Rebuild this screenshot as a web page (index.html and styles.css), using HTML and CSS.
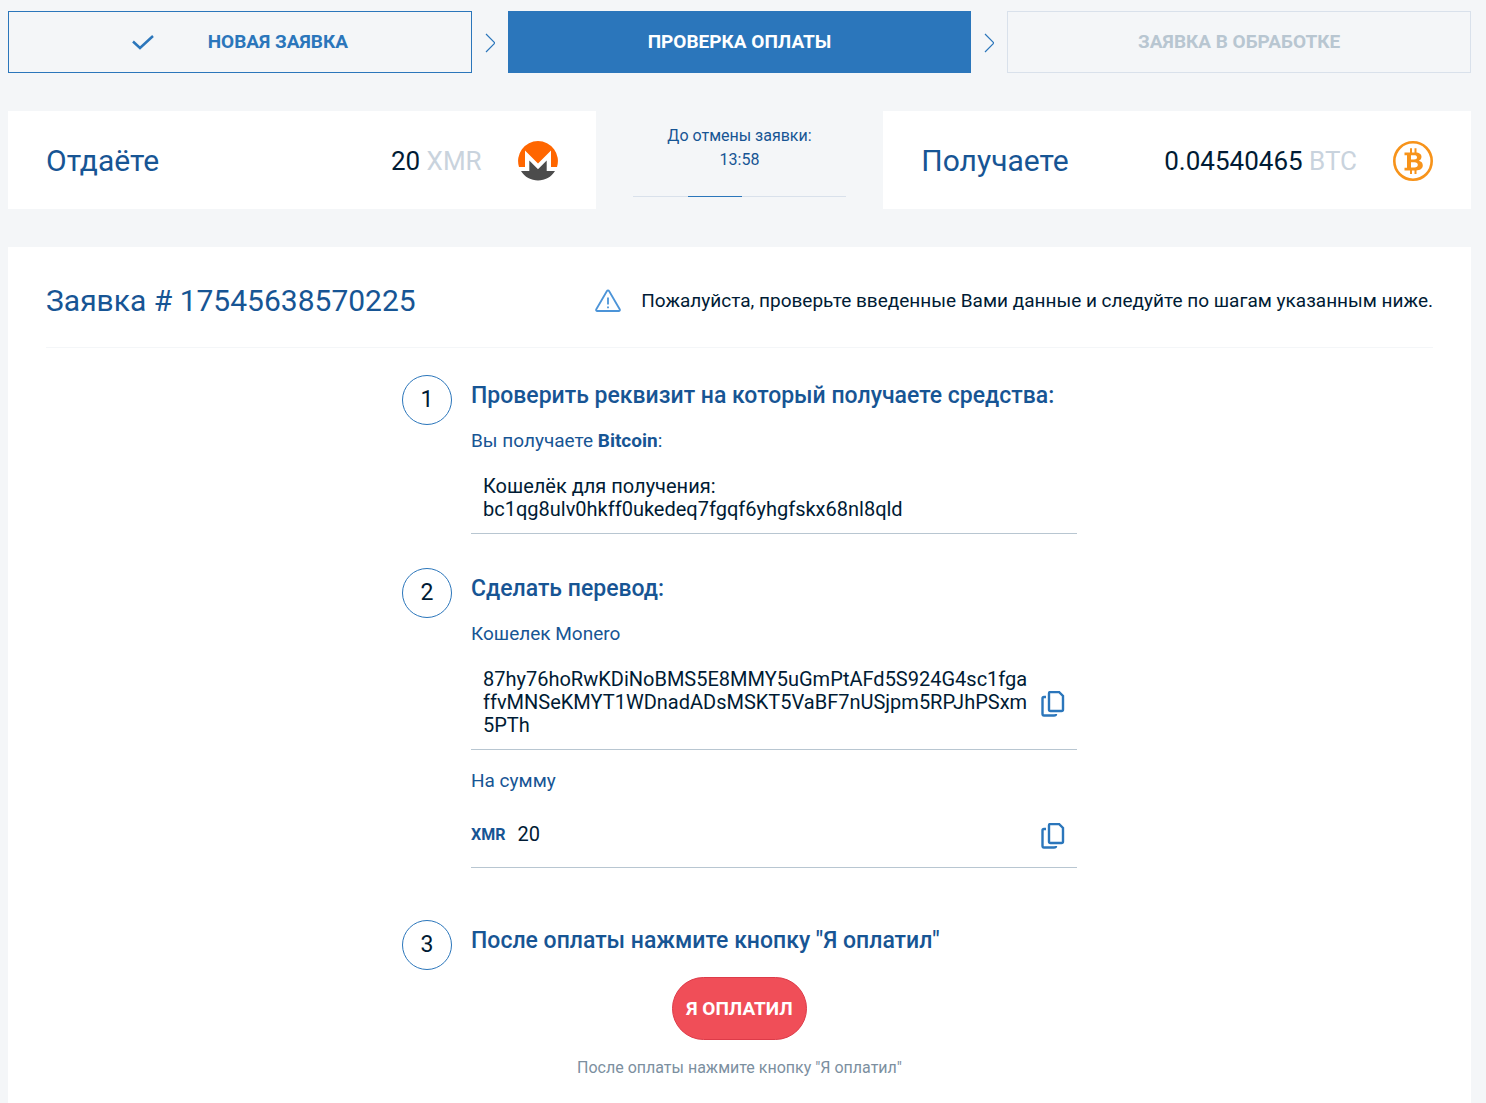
FILE: index.html
```html
<!DOCTYPE html>
<html lang="ru">
<head>
    <meta charset="UTF-8">
    <meta name="viewport" content="width=device-width, initial-scale=1.0">
    <title>Проверка оплаты</title>
    <link rel="stylesheet" href="styles.css">
</head>
<body>
    <ol class="progress">
        <li class="progress-step done">
            <svg class="check" viewBox="0 0 22 16" aria-hidden="true"><path d="M1 7.5l7 6.5L21 2"/></svg>
            <span>Новая заявка</span>
        </li>
        <li class="progress-arrow" aria-hidden="true">
            <svg viewBox="0 0 10 20"><path d="M1 1l9 9-9 9"/></svg>
        </li>
        <li class="progress-step active" aria-current="step">Проверка оплаты</li>
        <li class="progress-arrow" aria-hidden="true">
            <svg viewBox="0 0 10 20"><path d="M1 1l9 9-9 9"/></svg>
        </li>
        <li class="progress-step">Заявка в обработке</li>
    </ol>

    <section class="exchange">
        <div class="exchange-card">
            <h2 class="title">Отдаёте</h2>
            <p class="amount">20 <span>XMR</span></p>
            <svg class="coin" viewBox="0 0 40 40" aria-hidden="true">
                <path fill="#ff6600" d="M20 0a20 20 0 0 1 19 26h-6V9.500L20 22.500 7 9.500V26H1A20 20 0 0 1 20 0z"/>
                <path fill="#4c4c4c" d="M11.300 19.500l8.700 8.700 8.700-8.700V30H37a20 20 0 0 1-34 0h8.300z"/>
            </svg>
        </div>
        <div class="timer">
            <p>До отмены заявки:</p>
            <p>13:58</p>
            <div class="timer-line"><div class="timer-mark"></div></div>
        </div>
        <div class="exchange-card">
            <h2 class="title">Получаете</h2>
            <p class="amount">0.04540465 <span>BTC</span></p>
            <svg class="coin" viewBox="0 0 40 40" aria-hidden="true">
                <circle cx="20" cy="20" r="18.700" fill="none" stroke="#f7931a" stroke-width="2.600"/>
                <path fill="none" stroke="#f7931a" stroke-width="2" d="M18 7.300v5M22.500 7.300v5M18 28v5M22.500 28v5"/>
                <path fill="#f7931a" fill-rule="evenodd" d="M11.500 11.500h11c3.800 0 6 1.600 6 4.300 0 1.900-1 3.200-2.600 3.900 2.400.600 3.900 2.200 3.900 4.600 0 3.200-2.500 5.200-6.800 5.200h-11.500v-2.700h2.500V14.200h-2.500zM18 14.200v4.300h3c2 0 3-.700 3-2.200s-1-2.100-3-2.100zM18 21.200v5.300h3.500c2.100 0 3.300-.900 3.300-2.700s-1.200-2.600-3.300-2.600z"/>
            </svg>
        </div>
    </section>

    <main class="order">
        <header class="order-head">
            <h1 class="title">Заявка # 17545638570225</h1>
            <p class="notice">
                <svg viewBox="0 0 26 24" aria-hidden="true"><path d="M11.800 2.200L1.300 20.300c-.500.900 0 1.700 1 1.700h21.400c1 0 1.500-.800 1-1.700L14.200 2.200c-.600-1-1.800-1-2.400 0zM13 8.500v7M13 17.500v1.800"/></svg>
                Пожалуйста, проверьте введенные Вами данные и следуйте по шагам указанным ниже.
            </p>
        </header>

        <div class="steps">
            <section class="step">
                <div class="number">1</div>
                <div class="step-body">
                    <h3>Проверить реквизит на который получаете средства:</h3>
                    <p class="label">Вы получаете <b>Bitcoin</b>:</p>
                    <div class="field">
                        <p class="value">Кошелёк для получения: bc1qg8ulv0hkff0ukedeq7fgqf6yhgfskx68nl8qld</p>
                    </div>
                </div>
            </section>

            <section class="step">
                <div class="number">2</div>
                <div class="step-body">
                    <h3>Сделать перевод:</h3>
                    <p class="label">Кошелек Monero</p>
                    <div class="field">
                        <p class="value wallet">87hy76hoRwKDiNoBMS5E8MMY5uGmPtAFd5S924G4sc1fgaffvMNSeKMYT1WDnadADsMSKT5VaBF7nUSjpm5RPJhPSxm5PTh</p>
                        <button class="copy" type="button" aria-label="Скопировать кошелек">
                            <svg viewBox="0 0 24 26" aria-hidden="true"><path d="M9 1h9l4 4v13.500c0 .800-.500 1.500-1.500 1.500H9.500C8.500 20 8 19.300 8 18.500V2.500C8 1.700 8.200 1 9 1zM5 6H3C2 6 1.500 6.500 1.500 7.500v15.300c0 1.200.500 1.700 1.500 1.700h10c1.500 0 2-.500 2-1.500"/></svg>
                        </button>
                    </div>
                    <p class="label">На сумму</p>
                    <div class="field sum">
                        <b class="currency">XMR</b>
                        <p class="value">20</p>
                        <button class="copy" type="button" aria-label="Скопировать сумму">
                            <svg viewBox="0 0 24 26" aria-hidden="true"><path d="M9 1h9l4 4v13.500c0 .800-.500 1.500-1.500 1.500H9.500C8.500 20 8 19.300 8 18.500V2.500C8 1.700 8.200 1 9 1zM5 6H3C2 6 1.500 6.500 1.500 7.500v15.300c0 1.200.500 1.700 1.500 1.700h10c1.500 0 2-.500 2-1.500"/></svg>
                        </button>
                    </div>
                </div>
            </section>

            <section class="step last">
                <div class="number">3</div>
                <div class="step-body">
                    <h3>После оплаты нажмите кнопку "Я оплатил"</h3>
                </div>
            </section>

            <div class="confirm">
                <button class="paid" type="button">Я оплатил</button>
                <p class="hint">После оплаты нажмите кнопку "Я оплатил"</p>
            </div>
        </div>
    </main>
</body>
</html>
```
FILE: styles.css
```css
* {
    box-sizing: border-box;
}
body {
    display: flex;
    flex-direction: column;
    min-height: 100vh;
    margin: 0;
    padding: 11px 15px 0 8px;
    background: #f4f6f8;
    color: #001b34;
    font-family: Roboto, "Liberation Sans", sans-serif;
    font-size: 19px;
    line-height: 24px;
}
h1, h2, h3, p {
    margin: 0;
}
.title {
    color: #175594;
    font-size: 30px;
    font-weight: 400;
    line-height: 36px;
}

/* Шаги заявки */
.progress {
    display: flex;
    margin: 0 0 38px;
    padding: 0;
    list-style: none;
}
.progress-step {
    display: flex;
    flex: 1;
    align-items: center;
    justify-content: center;
    height: 62px;
    border: 1px solid #d9e1eb;
    color: #b8c6d1;
    font-weight: 700;
    text-transform: uppercase;
}
.progress-step.done {
    gap: 54px;
    border-color: #2b76bb;
    color: #2b76bb;
}
.progress-step.active {
    border-color: #2b76bb;
    background: #2b76bb;
    color: #fff;
}
.progress-arrow {
    display: flex;
    align-items: center;
    justify-content: center;
    width: 36px;
    padding-top: 2px;
}
.progress-arrow svg {
    width: 10px;
    height: 20px;
    fill: none;
    stroke: #2b76bb;
    stroke-width: 1.2;
}
.check {
    width: 22px;
    height: 16px;
    fill: none;
    stroke: #2b76bb;
    stroke-width: 2.5;
}

/* Сумма обмена */
.exchange {
    display: grid;
    grid-template-columns: 11fr 4fr 11fr;
    gap: 37px;
    margin-bottom: 38px;
}
.exchange-card {
    display: flex;
    align-items: center;
    height: 98px;
    padding: 2px 38px 0;
    background: #fff;
}
.amount {
    margin-left: auto;
    font-size: 26px;
    line-height: 32px;
}
.amount span {
    color: #c9d3dd;
}
.coin {
    width: 40px;
    height: 40px;
    margin-left: 36px;
}
.timer {
    padding-top: 13px;
    color: #175594;
    font-size: 16px;
    text-align: center;
}
.timer-line {
    height: 1px;
    margin-top: 24px;
    background: #d9e1eb;
}
.timer-mark {
    width: 25%;
    height: 1px;
    margin-left: 26%;
    background: #2b76bb;
}

/* Заявка */
.order {
    flex: 1;
    padding: 0 38px 24px;
    background: #fff;
}
.order-head {
    display: flex;
    align-items: center;
    justify-content: space-between;
    height: 101px;
    padding-bottom: 8px;
    padding-top: 15px;
    border-bottom: 1px solid #f4f6f8;
}
.notice {
    display: flex;
    align-items: center;
    gap: 20px;
}
.notice svg {
    width: 26px;
    height: 24px;
    fill: none;
    stroke: #4c94d8;
    stroke-width: 1.8;
}
.steps {
    max-width: 675px;
    margin: 0 auto;
    padding-top: 27px;
}
.step {
    display: flex;
    gap: 19px;
    margin-bottom: 34px;
}
.number {
    width: 50px;
    height: 50px;
    border: 1px solid #2b76bb;
    border-radius: 50%;
    font-size: 23px;
    line-height: 48px;
    text-align: center;
}
.step-body {
    flex: 1;
    min-width: 0;
    padding-top: 7px;
}
.step h3 {
    color: #175594;
    font-size: 23px;
    font-weight: 500;
    line-height: 28px;
}
.label {
    margin-top: 19px;
    color: #175594;
}
.field {
    display: flex;
    align-items: center;
    gap: 12px;
    padding: 22px 12px 12px;
    border-bottom: 1px solid #b8c6d1;
}
.field.sum {
    padding: 27px 12px 18px 0;
}
.value {
    flex: 1;
    font-size: 20px;
    line-height: 23px;
}
.value.wallet {
    word-break: break-all;
}
.currency {
    color: #175594;
    font-size: 16px;
}
.copy {
    width: 24px;
    height: 26px;
    margin-top: 3px;
    padding: 0;
    border: none;
    background: none;
    cursor: pointer;
}
.copy svg {
    display: block;
    width: 24px;
    height: 26px;
    fill: none;
    stroke: #2b76bb;
    stroke-width: 2.4;
}
.step.last {
    margin-top: 52px;
    margin-bottom: 7px;
}
.confirm {
    text-align: center;
}
.paid {
    height: 63px;
    padding: 0 13px;
    border: 1px solid #dd3b49;
    border-radius: 32px;
    background: #f04e58;
    color: #fff;
    font-family: inherit;
    font-size: 19px;
    font-weight: 700;
    text-transform: uppercase;
    cursor: pointer;
}
.paid:hover {
    background: #dd3b49;
}
.hint {
    margin-top: 16px;
    color: #7c8f9f;
    font-size: 16px;
}
```
